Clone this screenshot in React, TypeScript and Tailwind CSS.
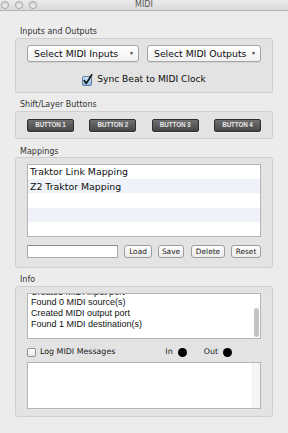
import React from "react";

const ui = { fontFamily: '"DejaVu Sans", Verdana, sans-serif' };
const helv = { fontFamily: '"Liberation Sans", Arial, sans-serif' };

function GroupLabel({ children, className = "" }: { children: React.ReactNode; className?: string }) {
    return (
        <div className={`ml-[20px] h-[10px] text-[8px] leading-[10px] text-[#333] ${className}`} style={ui}>
            {children}
        </div>
    );
}

function Popup({ label, width }: { label: string; width: string }) {
    return (
        <div
            className={`${width} h-[17px] flex items-center justify-between pl-[6px] pr-[4px] rounded-[3px] border border-[#a6a6a6] bg-gradient-to-b from-white to-[#f1f1f1] shadow-[0_1px_0_rgba(0,0,0,0.06)]`}
        >
            <span className="text-[9.3px] leading-none text-[#0d0d0d]" style={ui}>{label}</span>
            <span className="text-[5px] leading-none text-[#333]">▼</span>
        </div>
    );
}

function DarkButton({ label }: { label: string }) {
    return (
        <div className="w-[47px] h-[13px] flex items-center justify-center rounded-[2px] border border-[#2e2e2e] bg-gradient-to-b from-[#707070] to-[#474747] shadow-[0_1px_0_rgba(255,255,255,0.5)]">
            <span className="text-[6.3px] font-bold leading-none text-[#e6e6e6] tracking-[-0.1px]" style={helv}>{label}</span>
        </div>
    );
}

function SmallButton({ label, width }: { label: string; width: string }) {
    return (
        <div className={`${width} h-[13px] flex items-center justify-center rounded-[3px] border border-[#9d9d9d] bg-gradient-to-b from-white to-[#ebebeb]`}>
            <span className="text-[7.4px] leading-none text-[#1a1a1a]" style={ui}>{label}</span>
        </div>
    );
}

export default function App() {
    const rows = ["Traktor Link Mapping", "Z2 Traktor Mapping", "", "", ""];
    const log = [
        "Created MIDI input port",
        "Found 0 MIDI source(s)",
        "Created MIDI output port",
        "Found 1 MIDI destination(s)",
    ];

    return (
        <div className="w-[288px] h-[433px] bg-[#ececec] overflow-hidden flex flex-col">
            {/* title bar */}
            <div className="relative h-[11px] border-b border-[#b3b3b3] bg-gradient-to-b from-[#ebebeb] to-[#d9d9d9] flex items-center">
                <div className="flex gap-[6px] pl-[1px] -mt-[1px]">
                    <div className="w-[8px] h-[8px] rounded-full border border-[#a2a2a2] bg-gradient-to-b from-[#d8d8d8] to-[#f2f2f2]" />
                    <div className="w-[8px] h-[8px] rounded-full border border-[#a2a2a2] bg-gradient-to-b from-[#d8d8d8] to-[#f2f2f2]" />
                    <div className="w-[8px] h-[8px] rounded-full border border-[#a2a2a2] bg-gradient-to-b from-[#d8d8d8] to-[#f2f2f2]" />
                </div>
                <div className="absolute left-0 right-0 top-0 text-center text-[8px] leading-[10px] text-[#555]" style={ui}>
                    MIDI
                </div>
            </div>

            {/* Inputs and Outputs */}
            <GroupLabel className="mt-[16px]">Inputs and Outputs</GroupLabel>
            <div className="mx-[15px] mt-[1px] h-[55px] rounded-[3px] border border-[#cfcfcf] bg-[#e3e3e3] px-[11px] pt-[6px]">
                <div className="flex gap-[8px]">
                    <Popup label="Select MIDI Inputs" width="w-[112px]" />
                    <Popup label="Select MIDI Outputs" width="w-[114px]" />
                </div>
                <div className="mt-[12px] flex items-center justify-center gap-[4px]">
                    <svg width="11" height="12" viewBox="0 0 11 12">
                        <defs>
                            <linearGradient id="cb" x1="0" y1="0" x2="0" y2="1">
                                <stop offset="0" stopColor="#cfe2f5" />
                                <stop offset="1" stopColor="#8fb7e0" />
                            </linearGradient>
                        </defs>
                        <rect x="0.5" y="2.5" width="9" height="9" rx="1.5" fill="url(#cb)" stroke="#5a7fa8" />
                        <path d="M2.2 6.6 L4.3 9.4 L9.8 0.8" fill="none" stroke="#111" strokeWidth="1.6" strokeLinecap="round" strokeLinejoin="round" />
                    </svg>
                    <span className="text-[9.1px] leading-none text-[#0d0d0d]" style={ui}>Sync Beat to MIDI Clock</span>
                </div>
            </div>

            {/* Shift/Layer Buttons */}
            <GroupLabel className="mt-[7px]">Shift/Layer Buttons</GroupLabel>
            <div className="mx-[15px] mt-[1px] h-[28px] rounded-[3px] border border-[#cfcfcf] bg-[#e3e3e3] px-[11px] pt-[7px]">
                <div className="flex justify-between">
                    <DarkButton label="BUTTON 1" />
                    <DarkButton label="BUTTON 2" />
                    <DarkButton label="BUTTON 3" />
                    <DarkButton label="BUTTON 4" />
                </div>
            </div>

            {/* Mappings */}
            <GroupLabel className="mt-[8px]">Mappings</GroupLabel>
            <div className="mx-[15px] h-[111px] rounded-[3px] border border-[#cfcfcf] bg-[#e3e3e3] px-[11px] pt-[6px]">
                <div className="h-[73px] border border-[#b4b4b4] bg-white flex flex-col">
                    {rows.map((r, i) => (
                        <div
                            key={i}
                            className={`h-[14.2px] flex items-center pl-[2px] text-[9.4px] leading-none text-[#0d0d0d] ${i % 2 === 1 ? "bg-[#eff3f9]" : "bg-white"}`}
                            style={ui}
                        >
                            {r}
                        </div>
                    ))}
                </div>
                <div className="mt-[8px] flex items-center">
                    <div className="w-[91px] h-[13px] border border-[#a9a9a9] border-t-[#8c8c8c] bg-white" />
                    <div className="ml-[6px]"><SmallButton label="Load" width="w-[28px]" /></div>
                    <div className="ml-[6px]"><SmallButton label="Save" width="w-[26px]" /></div>
                    <div className="ml-[7px]"><SmallButton label="Delete" width="w-[34px]" /></div>
                    <div className="ml-[6px]"><SmallButton label="Reset" width="w-[30px]" /></div>
                </div>
            </div>

            {/* Info */}
            <GroupLabel className="mt-[7px]">Info</GroupLabel>
            <div className="mx-[15px] mt-[1px] h-[131px] rounded-[3px] border border-[#cfcfcf] bg-[#e3e3e3] px-[11px] pt-[6px]">
                <div className="relative h-[46px] border border-[#b4b4b4] bg-white overflow-hidden">
                    <div className="-mt-[7.5px] pl-[3px] text-[9px] leading-[10.7px] text-[#111]" style={helv}>
                        {log.map((l) => (
                            <div key={l}>{l}</div>
                        ))}
                    </div>
                    <div className="absolute right-[1px] top-[14px] w-[5px] h-[29px] rounded-full bg-[#c3c3c3]" />
                </div>
                <div className="mt-[7px] h-[12px] flex items-center">
                    <div className="w-[9px] h-[9px] rounded-[2px] border border-[#8f8f8f] bg-gradient-to-b from-white to-[#e9e9e9]" />
                    <span className="ml-[4px] text-[7.9px] leading-none text-[#1a1a1a]" style={ui}>Log MIDI Messages</span>
                    <span className="ml-[50px] text-[7.9px] leading-none text-[#1a1a1a]" style={ui}>In</span>
                    <div className="ml-[5px] w-[9px] h-[9px] rounded-full bg-black" />
                    <span className="ml-[17px] text-[7.9px] leading-none text-[#1a1a1a]" style={ui}>Out</span>
                    <div className="ml-[5px] w-[9px] h-[9px] rounded-full bg-black" />
                </div>
                <div className="mt-[4px] h-[47px] border border-[#b4b4b4] bg-white flex justify-end">
                    <div className="w-[8px] h-full border-l border-[#ececec] bg-[#f6f6f6]" />
                </div>
            </div>
        </div>
    );
}
